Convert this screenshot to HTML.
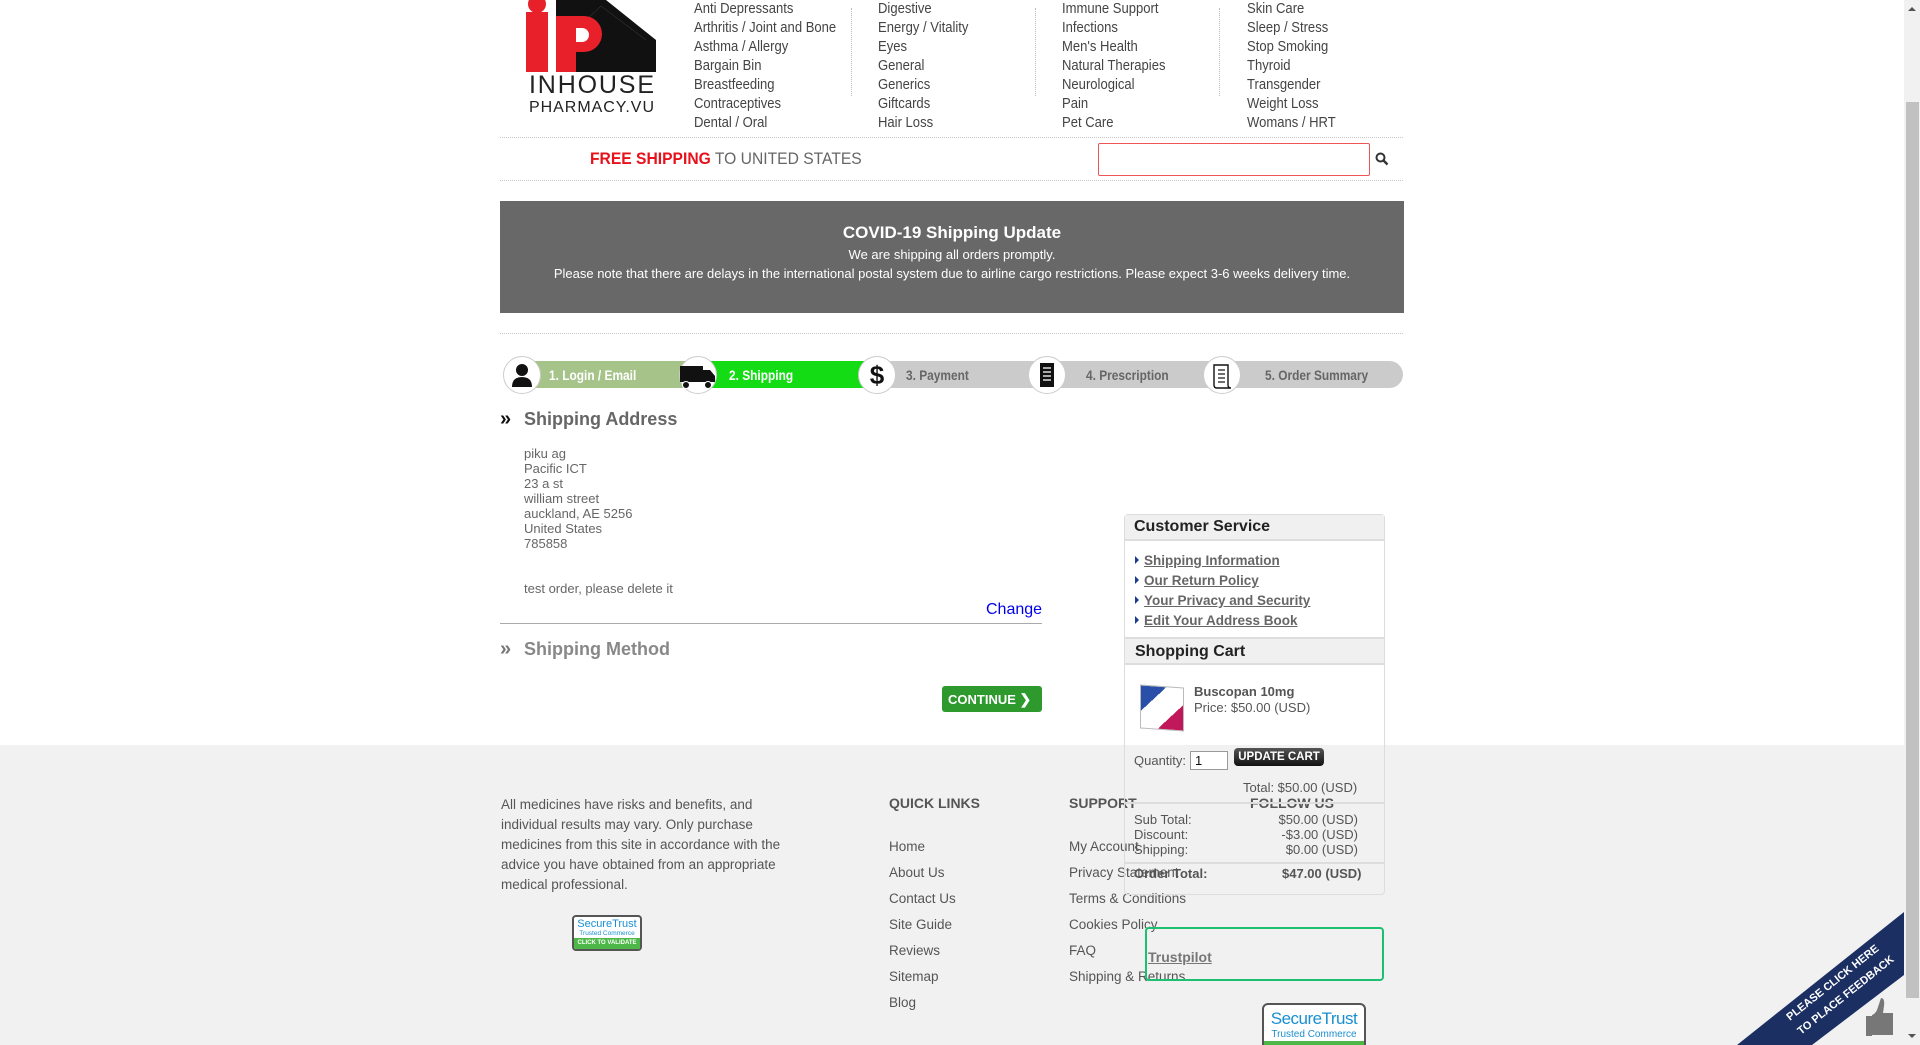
<!DOCTYPE html>
<html><head><meta charset="utf-8">
<style>
*{margin:0;padding:0;box-sizing:border-box}
html,body{width:1920px;height:1045px;overflow:hidden;background:#fff;font-family:"Liberation Sans",Arial,sans-serif;color:#555;position:relative}
.a{position:absolute;white-space:nowrap}
.menu{position:absolute;top:0;font-size:14.5px;line-height:19px;color:#444;transform:scaleX(.9);transform-origin:0 0;white-space:nowrap}
.vd{position:absolute;top:8px;height:125px;border-left:1px dotted #bbb}
.hd{position:absolute;left:500px;width:903px;border-top:1px dotted #c8c8c8}
.step{position:absolute;top:361px;height:27px}
.circ{position:absolute;top:356px;width:38px;height:38px;border-radius:50%;background:#fff;border:1px solid #ccc}
.lbl{position:absolute;top:367px;font-size:14px;font-weight:bold;transform:scaleX(.85);transform-origin:0 0;white-space:nowrap}
.addr{position:absolute;left:524px;font-size:13px;color:#666;line-height:15px}
.cs a{color:#666;font-weight:bold;text-decoration:underline;font-size:13.5px}
.cs div{position:absolute;left:1135px;white-space:nowrap}
.tri{display:inline-block;width:0;height:0;border-left:4px solid #1a3d8f;border-top:4px solid transparent;border-bottom:4px solid transparent;margin-right:5px;vertical-align:1px}
.f{position:absolute;font-size:13.5px;color:#555;white-space:nowrap}
.fh{position:absolute;font-size:14px;font-weight:bold;color:#555;top:795px}
</style></head><body>

<!-- logo -->
<svg class="a" style="left:526px;top:0" width="132" height="116" viewBox="0 0 132 116">
<polygon points="30,0 80,0 130,40 130,72 120,72 120,40 75,6 60,20 60,72 30,72" fill="#111"/>
<polygon points="60,20 75,6 120,40 120,72 60,72" fill="#111"/>
<rect x="0" y="12" width="22" height="60" fill="#e8202a"/>
<circle cx="11" cy="4" r="9" fill="#e8202a"/>
<path d="M30 16 h28 a18 18 0 0 1 0 36 h-8 v20 h-20z" fill="#e8202a"/>
<path d="M50 28 h6 a7 7 0 0 1 0 14 h-6z" fill="#fff"/>
<text x="3" y="93" font-family="Liberation Sans" font-size="25" fill="#222" textLength="125">INHOUSE</text>
<text x="3" y="112" font-family="Liberation Sans" font-size="16" fill="#222" textLength="125">PHARMACY.VU</text>
</svg>

<div class="menu" style="left:694px;top:0">Anti Depressants<br>Arthritis / Joint and Bone<br>Asthma / Allergy<br>Bargain Bin<br>Breastfeeding<br>Contraceptives<br>Dental / Oral</div>
<div class="menu" style="left:878px">Digestive<br>Energy / Vitality<br>Eyes<br>General<br>Generics<br>Giftcards<br>Hair Loss</div>
<div class="menu" style="left:1062px">Immune Support<br>Infections<br>Men's Health<br>Natural Therapies<br>Neurological<br>Pain<br>Pet Care</div>
<div class="menu" style="left:1247px">Skin Care<br>Sleep / Stress<br>Stop Smoking<br>Thyroid<br>Transgender<br>Weight Loss<br>Womans / HRT</div>
<div class="vd" style="left:851px;height:88px"></div>
<div class="vd" style="left:1035px;height:88px"></div>
<div class="vd" style="left:1219px;height:88px"></div>

<div class="hd" style="top:137px"></div>
<div class="a" style="left:590px;top:149px;font-size:17px;transform:scaleX(.92);transform-origin:0 0"><b style="color:#e8101a">FREE SHIPPING</b> <span style="color:#666">TO UNITED STATES</span></div>
<div class="a" style="left:1098px;top:143px;width:272px;height:33px;border:1px solid #e55;border-radius:2px"></div>
<svg class="a" style="left:1375px;top:152px" width="14" height="14" viewBox="0 0 14 14"><circle cx="5.5" cy="5.5" r="4" fill="none" stroke="#333" stroke-width="2"/><line x1="8.5" y1="8.5" x2="12.5" y2="12.5" stroke="#333" stroke-width="2.4"/></svg>
<div class="hd" style="top:180px"></div>

<div class="a" style="left:500px;top:201px;width:904px;height:112px;background:#686868;color:#fff;text-align:center">
<div style="position:absolute;top:22px;width:100%;font-size:17px;font-weight:bold">COVID-19 Shipping Update</div>
<div style="position:absolute;top:46px;width:100%;font-size:13px">We are shipping all orders promptly.</div>
<div style="position:absolute;top:65px;width:100%;font-size:13px">Please note that there are delays in the international postal system due to airline cargo restrictions. Please expect 3-6 weeks delivery time.</div>
</div>
<div class="hd" style="top:333px"></div>

<!-- progress -->
<div class="step" style="left:1030px;width:373px;background:#cbcbcb;border-radius:0 14px 14px 0"></div>
<div class="step" style="left:870px;width:170px;background:#cbcbcb"></div>
<div class="step" style="left:700px;width:172px;background:#14dc14"></div>
<div class="step" style="left:520px;width:182px;background:#a6c48a"></div>
<div class="circ" style="left:503px"><svg width="36" height="36" viewBox="0 0 36 36"><circle cx="18" cy="13" r="6" fill="#111"/><path d="M8 30 q0-10 10-10 q10 0 10 10z" fill="#111"/></svg></div>
<div class="circ" style="left:679px"><svg width="36" height="36" viewBox="0 0 36 36"><rect x="-1" y="9" width="24" height="16" fill="#111"/><path d="M23 13 h7 l5 6 v6 h-12z" fill="#111"/><circle cx="6" cy="28" r="3.5" fill="#111" stroke="#fff"/><circle cx="28" cy="28" r="3.5" fill="#111" stroke="#fff"/></svg></div>
<div class="circ" style="left:858px;text-align:center;font-size:26px;font-weight:bold;color:#111;line-height:36px">$</div>
<div class="circ" style="left:1028px"><svg width="36" height="36" viewBox="0 0 36 36"><rect x="11" y="6" width="14" height="24" fill="#111"/><g stroke="#fff" stroke-width="1.3"><line x1="14" y1="11" x2="22" y2="11"/><line x1="14" y1="15" x2="22" y2="15"/><line x1="14" y1="19" x2="22" y2="19"/><line x1="14" y1="23" x2="22" y2="23"/></g></svg></div>
<div class="circ" style="left:1203px"><svg width="36" height="36" viewBox="0 0 36 36"><path d="M10 8 h14 v20 q0 3 3 3 h-14 q-3 0-3-3z" fill="#fff" stroke="#111" stroke-width="1.4"/><g stroke="#111" stroke-width="1.2"><line x1="14" y1="13" x2="21" y2="13"/><line x1="14" y1="17" x2="21" y2="17"/><line x1="14" y1="21" x2="21" y2="21"/><line x1="14" y1="25" x2="21" y2="25"/></g></svg></div>
<div class="lbl" style="left:549px;color:#fff">1. Login / Email</div>
<div class="lbl" style="left:729px;color:#fff">2. Shipping</div>
<div class="lbl" style="left:906px;color:#666">3. Payment</div>
<div class="lbl" style="left:1086px;color:#666">4. Prescription</div>
<div class="lbl" style="left:1265px;color:#666">5. Order Summary</div>

<div class="a" style="left:500px;top:408px;font-size:18px;font-weight:bold;color:#666"><span style="color:#111;font-size:20px;display:inline-block;width:24px">&raquo;</span>Shipping Address</div>
<div class="addr" style="top:446px">piku ag<br>Pacific ICT<br>23 a st<br>william street<br>auckland, AE 5256<br>United States<br>785858</div>
<div class="addr" style="top:581px">test order, please delete it</div>
<div class="a" style="left:986px;top:601px;font-size:16px;color:#0000ee">Change</div>
<div class="a" style="left:500px;top:623px;width:542px;border-top:1px solid #aaa"></div>
<div class="a" style="left:500px;top:638px;font-size:18px;font-weight:bold;color:#888"><span style="color:#777;font-size:20px;display:inline-block;width:24px">&raquo;</span>Shipping Method</div>
<div class="a" style="left:942px;top:686px;width:100px;height:26px;background:#2e9a2e;border-radius:3px;color:#fff;font-size:13px;font-weight:bold;line-height:26px;padding-left:6px">CONTINUE <span style="font-size:14px">&#10095;</span></div>

<!-- footer -->
<div class="a" style="left:0;top:745px;width:1904px;height:300px;background:#f1f1f1"></div>
<div class="f" style="left:501px;top:795px;line-height:20px;white-space:normal;width:290px">All medicines have risks and benefits, and individual results may vary. Only purchase medicines from this site in accordance with the advice you have obtained from an appropriate medical professional.</div>
<div class="a" style="left:572px;top:915px;width:70px;height:36px;border:2px solid #555;border-radius:4px;background:#fff;overflow:hidden;text-align:center">
<div style="font-size:11px;color:#1a8fd0;line-height:12px;margin-top:1px">SecureTrust</div>
<div style="font-size:6.5px;color:#1a8fd0;line-height:8px">Trusted Commerce</div>
<div style="background:#4db848;color:#fff;font-size:6px;line-height:11px;font-weight:bold">CLICK TO VALIDATE</div></div>
<div class="fh" style="left:889px">QUICK LINKS</div>
<div class="fh" style="left:1069px">SUPPORT</div>
<div class="fh" style="left:1250px">FOLLOW US</div>
<div class="f" style="left:889px;top:834px;line-height:26px">Home<br>About Us<br>Contact Us<br>Site Guide<br>Reviews<br>Sitemap<br>Blog</div>
<div class="f" style="left:1069px;top:834px;line-height:26px">My Account<br>Privacy Statement<br>Terms &amp; Conditions<br>Cookies Policy<br>FAQ<br>Shipping &amp; Returns</div>

<!-- right box -->
<div class="a" style="left:1124px;top:514px;width:261px;height:381px;border:1px solid #ddd;border-radius:4px"></div>
<div class="a" style="left:1125px;top:515px;width:259px;height:26px;background:#f0f0f0;border-bottom:2px solid #ddd;font-size:16px;font-weight:bold;color:#222;padding:3px 0 0 9px">Customer Service</div>
<div class="a" style="left:1125px;top:543px;width:259px;height:95px;background:#fff"></div>
<div class="cs">
<div style="top:552px"><span class="tri"></span><a>Shipping Information</a></div>
<div style="top:572px"><span class="tri"></span><a>Our Return Policy</a></div>
<div style="top:592px"><span class="tri"></span><a>Your Privacy and Security</a></div>
<div style="top:612px"><span class="tri"></span><a>Edit Your Address Book</a></div>
</div>
<div class="a" style="left:1125px;top:637px;width:259px;height:28px;background:#f0f0f0;border-top:2px solid #ddd;border-bottom:2px solid #ddd;font-size:16px;font-weight:bold;color:#222;padding:4px 0 0 10px">Shopping Cart</div>
<div class="a" style="left:1125px;top:665px;width:259px;height:80px;background:#fff"></div>
<div class="a" style="left:1140px;top:686px;width:44px;height:44px;background:linear-gradient(135deg,#2a4fa8 0 30%,#fff 30% 70%,#c0185a 70%);border:1px solid #bbb;transform:skewY(4deg)"></div>
<div class="a" style="left:1194px;top:684px;font-size:13px;font-weight:bold;color:#555">Buscopan 10mg</div>
<div class="a" style="left:1194px;top:700px;font-size:13px;color:#555">Price: $50.00 (USD)</div>
<div class="a" style="left:1134px;top:753px;font-size:13px;color:#555">Quantity:</div>
<div class="a" style="left:1190px;top:751px;width:38px;height:19px;border:1px solid #999;background:#fff;font-size:13px;color:#111;padding:1px 4px">1</div>
<div class="a" style="left:1234px;top:748px;width:90px;height:18px;background:linear-gradient(#555,#111);border-radius:4px;color:#fff;font-size:11.5px;font-weight:bold;text-align:center;line-height:18px">UPDATE CART</div>
<div class="a" style="left:1243px;top:780px;font-size:13px;color:#555">Total: $50.00 (USD)</div>
<div class="a" style="left:1125px;top:802px;width:259px;border-top:2px solid #ddd"></div>
<div class="a" style="left:1134px;top:812px;font-size:13px;color:#555;line-height:15px">Sub Total:<br>Discount:<br>Shipping:</div>
<div class="a" style="left:1240px;top:812px;width:118px;text-align:right;font-size:13px;color:#555;line-height:15px">$50.00 (USD)<br>-$3.00 (USD)<br>$0.00 (USD)</div>
<div class="a" style="left:1125px;top:862px;width:259px;border-top:2px solid #ddd"></div>
<div class="a" style="left:1134px;top:866px;font-size:13px;font-weight:bold;color:#555">Order Total:</div>
<div class="a" style="left:1282px;top:866px;font-size:13px;font-weight:bold;color:#555">$47.00 (USD)</div>

<div class="a" style="left:1145px;top:927px;width:239px;height:54px;border:2px solid #1dbf73;border-radius:4px"></div>
<div class="a" style="left:1148px;top:949px;font-size:14px;font-weight:bold;color:#777;text-decoration:underline">Trustpilot</div>
<div class="a" style="left:1262px;top:1003px;width:104px;height:50px;border:2px solid #555;border-radius:6px;background:#fff;text-align:center;overflow:hidden">
<div style="font-size:17px;color:#1a8fd0;line-height:20px;margin-top:4px;letter-spacing:-.5px">SecureTrust</div>
<div style="font-size:10px;color:#1a8fd0;line-height:12px">Trusted Commerce</div>
<div style="background:#4db848;height:10px"></div></div>

<!-- feedback ribbon -->
<svg class="a" style="left:1700px;top:880px" width="204" height="165" viewBox="0 0 204 165">
<polygon points="37,165 204,32 204,95 112,165" fill="#1b2f63"/>
<text x="0" y="0" transform="translate(90,141) rotate(-38.5)" font-family="Liberation Sans" font-size="11" font-weight="bold" fill="#fff">PLEASE CLICK HERE</text>
<text x="0" y="0" transform="translate(101,155) rotate(-38.5)" font-family="Liberation Sans" font-size="11" font-weight="bold" fill="#fff">TO PLACE FEEDBACK</text>
<path d="M172 155 v-20 q3-1 5-5 l4-12 q4 0 3 8 l-1 7 h10 v22z" fill="#777"/>
<rect x="166" y="136" width="6" height="20" fill="#777"/>
</svg>

<!-- scrollbar -->
<div class="a" style="left:1904px;top:0;width:16px;height:1045px;background:#f1f1f1"></div>
<div class="a" style="left:1906px;top:102px;width:13px;height:896px;background:#c1c1c1"></div>
<div class="a" style="left:1908px;top:7px;border-left:4px solid transparent;border-right:4px solid transparent;border-bottom:4px solid #555"></div>
<div class="a" style="left:1908px;top:1034px;border-left:4px solid transparent;border-right:4px solid transparent;border-top:4px solid #555"></div>
</body></html>
